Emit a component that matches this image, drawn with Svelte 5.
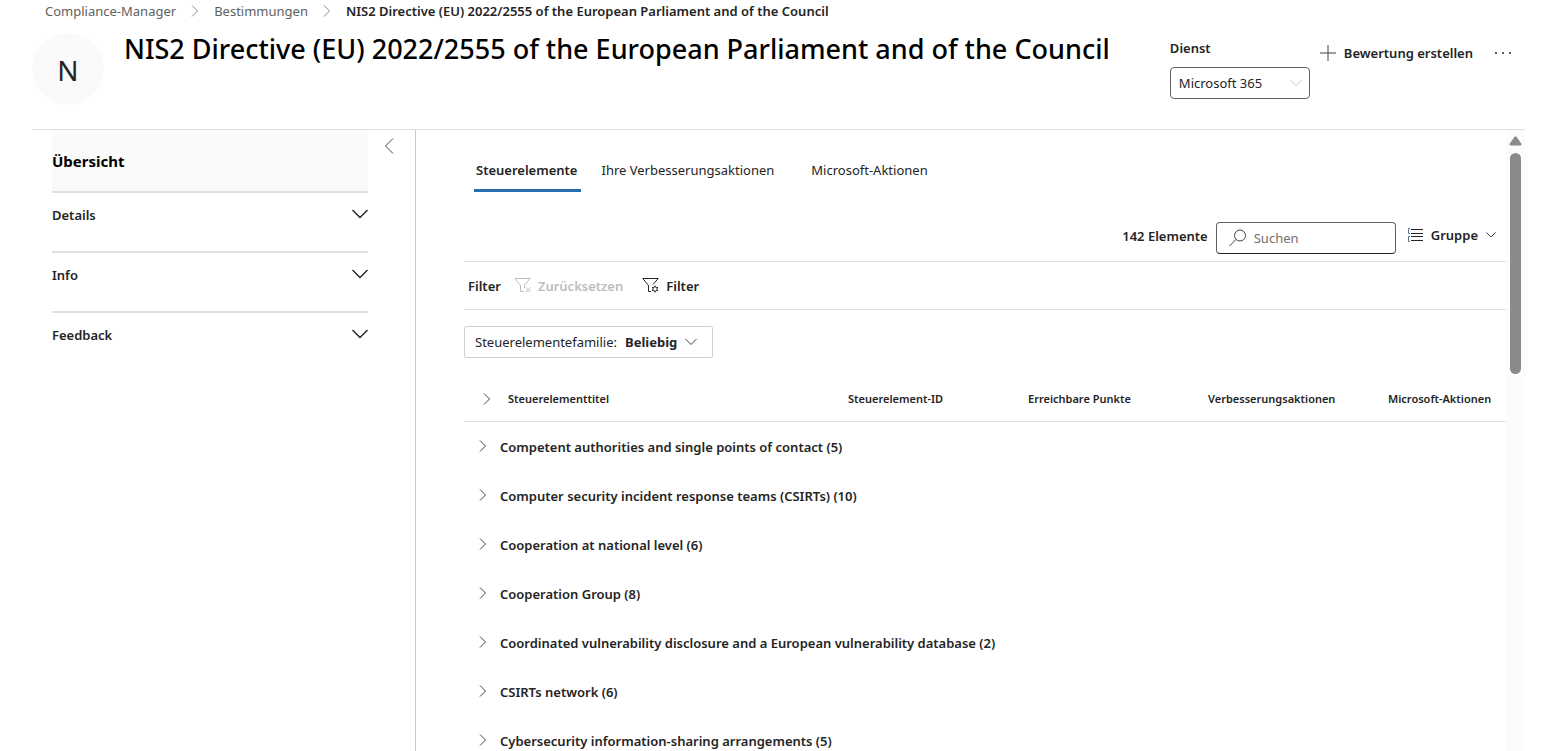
<script lang="ts">
	const service = 'Microsoft 365';
	const title = 'NIS2 Directive (EU) 2022/2555 of the European Parliament and of the Council';

	let activeTab = $state(0);
	let query = $state('');

	const crumbs = ['Compliance-Manager', 'Bestimmungen'];
	const panels = ['Details', 'Info', 'Feedback'];
	const tabs = ['Steuerelemente', 'Ihre Verbesserungsaktionen', 'Microsoft-Aktionen'];
	const columns = [
		'Steuerelement-ID',
		'Erreichbare Punkte',
		'Verbesserungsaktionen',
		'Microsoft-Aktionen'
	];

	const groups: { name: string; count: number }[] = [
		{ name: 'Competent authorities and single points of contact', count: 5 },
		{ name: 'Computer security incident response teams (CSIRTs)', count: 10 },
		{ name: 'Cooperation at national level', count: 6 },
		{ name: 'Cooperation Group', count: 8 },
		{ name: 'Coordinated vulnerability disclosure and a European vulnerability database', count: 2 },
		{ name: 'CSIRTs network', count: 6 },
		{ name: 'Cybersecurity information-sharing arrangements', count: 5 }
	];
</script>

{#snippet chevronRight()}
	<svg width="8" height="12" viewBox="0 0 8 12" aria-hidden="true">
		<path d="M1 0.5 6.5 6 1 11.5" />
	</svg>
{/snippet}

{#snippet chevronDown()}
	<svg width="12" height="8" viewBox="0 0 12 8" aria-hidden="true">
		<path d="M0.5 1 6 6.5 11.5 1" />
	</svg>
{/snippet}

<div class="page">
	<header class="header">
		<nav class="breadcrumb" aria-label="Breadcrumb">
			{#each crumbs as crumb}
				<a href="#{crumb}">{crumb}</a>
				{@render chevronRight()}
			{/each}
			<span class="current">{title}</span>
		</nav>

		<div class="title-row">
			<div class="avatar">N</div>
			<h1>{title}</h1>
			<div class="service">
				<label for="service">Dienst</label>
				<div class="select-wrap">
					<select id="service">
						<option>{service}</option>
					</select>
					{@render chevronDown()}
				</div>
			</div>
			<button class="command create">
				<svg width="16" height="16" viewBox="0 0 16 16" aria-hidden="true">
					<path d="M8 0v16M0 8h16" />
				</svg>
				Bewertung erstellen
			</button>
			<button class="command more" aria-label="Mehr">
				<svg width="16" height="4" viewBox="0 0 16 4" aria-hidden="true">
					<circle cx="1" cy="2" r="1" />
					<circle cx="8" cy="2" r="1" />
					<circle cx="15" cy="2" r="1" />
				</svg>
			</button>
		</div>
	</header>

	<div class="body">
		<aside class="sidebar">
			<div class="panels">
				<h2>Übersicht</h2>
				{#each panels as panel}
					<button class="panel">
						{panel}
						<svg width="16" height="10" viewBox="0 0 16 10" aria-hidden="true">
							<path d="M0.5 1 8 8.5 15.5 1" />
						</svg>
					</button>
				{/each}
			</div>
			<button class="collapse" aria-label="Einklappen">
				<svg width="10" height="16" viewBox="0 0 10 16" aria-hidden="true">
					<path d="M9 0.5 1.5 8 9 15.5" />
				</svg>
			</button>
		</aside>

		<main class="content">
			<div class="tabs" role="tablist">
				{#each tabs as tab, i}
					<button
						role="tab"
						class="tab"
						class:active={activeTab === i}
						aria-selected={activeTab === i}
						onclick={() => (activeTab = i)}>{tab}</button
					>
				{/each}
			</div>

			<div class="toolbar">
				<span class="count">142 Elemente</span>
				<label class="search">
					<svg width="18" height="18" viewBox="0 0 18 18" aria-hidden="true">
						<circle cx="11" cy="6.5" r="5.5" />
						<path d="M7 10.5 0.5 17" />
					</svg>
					<input type="text" placeholder="Suchen" aria-label="Suchen" bind:value={query} />
				</label>
				<button class="command group">
					<svg class="list-icon" width="16" height="14" viewBox="0 0 16 14" aria-hidden="true">
						<path d="M4 1.5h12M4 5.5h12M4 8.5h12M4 12.5h12" />
						<path class="bracket" d="M3 0.5H1.5v5H3M3 8.5H1.5v5H3" />
					</svg>
					Gruppe
					<svg width="10" height="6" viewBox="0 0 10 6" aria-hidden="true">
						<path d="M0.5 0.5 5 5 9.5 0.5" />
					</svg>
				</button>
			</div>

			<div class="filters">
				<span>Filter</span>
				<button class="command" disabled>
					<svg width="17" height="15" viewBox="0 0 17 15" aria-hidden="true">
						<path d="M10 13.5H6.5V7.5L0.8 0.5h15.4L10.5 7v3" />
						<path d="M12 9.5l4.5 4.5M16.5 9.5L12 14" />
					</svg>
					Zurücksetzen
				</button>
				<button class="command set-filter">
					<svg width="17" height="15" viewBox="0 0 17 15" aria-hidden="true">
						<path d="M9 13.5H6.5V7.5L0.8 0.5h15.4L11 6.5" />
						<circle cx="13" cy="11" r="2.2" />
						<path d="M13 7.5v1.3M13 13.2v1.3M10 9.3l1.1.6M14.9 12.1l1.1.6M10 12.7l1.1-.6M14.9 9.9l1.1-.6" />
					</svg>
					Filter
				</button>
			</div>

			<button class="pill">
				Steuerelementefamilie: <b>Beliebig</b>
				{@render chevronDown()}
			</button>

			<table>
				<colgroup>
					<col class="col-toggle" />
					<col />
					<col class="col-data" />
					<col class="col-data" />
					<col class="col-data" />
					<col class="col-last" />
				</colgroup>
				<thead>
					<tr>
						<th class="toggle-all">
							<button aria-label="Alle erweitern">{@render chevronRight()}</button>
						</th>
						<th>Steuerelementtitel</th>
						{#each columns as column}
							<th>{column}</th>
						{/each}
					</tr>
				</thead>
				<tbody>
					{#each groups as group}
						<tr>
							<td colspan="6">
								<button class="group-row">
									{@render chevronRight()}
									{group.name} ({group.count})
								</button>
							</td>
						</tr>
					{/each}
				</tbody>
			</table>
		</main>

		<div class="scrollbar" aria-hidden="true">
			<svg width="13" height="10" viewBox="0 0 13 10">
				<path d="M5.5 0.8Q6.5 -0.4 7.5 0.8L12.2 7.5Q13 9.6 11 9.6H2Q0 9.6 0.8 7.5Z" />
			</svg>
			<div class="thumb"></div>
		</div>
	</div>
</div>

<style>
	:global(body) {
		background: #fff;
	}

	.page {
		display: flex;
		flex-direction: column;
		height: 100vh;
		padding: 0 23px 0 32px;
		box-sizing: border-box;
		overflow: hidden;
		font-family: 'Noto Sans', 'Open Sans', sans-serif;
		font-size: 13px;
		line-height: 20px;
		color: #242424;
	}

	button {
		padding: 0;
		border: none;
		background: none;
		font: inherit;
		font-weight: 600;
		color: inherit;
		cursor: pointer;
	}

	svg {
		flex: none;
		fill: none;
		stroke: #424242;
	}

	.header {
		flex: none;
		height: 129px;
		border-bottom: 1px solid #e0e0e0;
	}

	.breadcrumb {
		display: flex;
		align-items: center;
		gap: 15px;
		height: 22px;
		padding-left: 13px;
	}

	.breadcrumb a {
		color: #616161;
		text-decoration: none;
	}

	.breadcrumb svg {
		stroke: #8a8a8a;
	}

	.breadcrumb .current {
		font-weight: 600;
	}

	.title-row {
		display: flex;
		align-items: flex-start;
		padding-top: 11px;
	}

	.avatar {
		flex: none;
		width: 72px;
		height: 72px;
		border-radius: 50%;
		background: #fafafa;
		font-size: 28px;
		line-height: 74px;
		text-align: center;
	}

	h1 {
		flex: 1;
		margin: 0 0 0 20px;
		font-size: 27px;
		font-weight: 500;
		line-height: 32px;
		white-space: nowrap;
		color: #000;
	}

	.service {
		width: 140px;
		padding-top: 5px;
	}

	.service label {
		display: block;
		margin-bottom: 9px;
		font-weight: 600;
	}

	.select-wrap {
		position: relative;
	}

	.select-wrap svg {
		position: absolute;
		top: 12px;
		right: 8px;
		stroke: #c8c8c8;
		pointer-events: none;
	}

	select {
		width: 100%;
		height: 32px;
		padding: 0 8px;
		border: 1px solid #616161;
		border-radius: 4px;
		background: #fff;
		appearance: none;
		font: inherit;
		color: inherit;
	}

	.command {
		display: flex;
		align-items: center;
		gap: 8px;
	}

	.create {
		margin: 10px 22px 0 10px;
		white-space: nowrap;
	}

	.more {
		height: 20px;
		margin: 10px 14px 0 0;
	}

	.more svg {
		fill: #242424;
		stroke: none;
	}

	.body {
		display: flex;
		flex: 1;
		min-height: 0;
	}

	.sidebar {
		display: flex;
		flex: none;
		align-items: flex-start;
		gap: 16px;
		width: 383px;
		padding-left: 20px;
		box-sizing: border-box;
	}

	.panels {
		width: 316px;
	}

	h2 {
		margin: 0;
		height: 61px;
		background: #fafafa;
		font-size: 15px;
		font-weight: 700;
		line-height: 62px;
		color: #000;
	}

	.panel {
		display: flex;
		justify-content: space-between;
		width: 100%;
		height: 60px;
		padding-top: 12px;
		border-top: 2px solid #e0e0e0;
	}

	.panel svg {
		margin-top: 4px;
		stroke: #242424;
		stroke-width: 1.4;
	}

	.collapse {
		display: flex;
		padding-top: 8px;
	}

	.content {
		flex: 1;
		min-width: 0;
		padding-left: 48px;
		border-left: 1px solid #c8c8c8;
		overflow: hidden;
	}

	.tabs {
		display: flex;
		gap: 20px;
		padding: 18px 0 0 10px;
	}

	.tab {
		height: 44px;
		padding: 0 17px 0 0;
		border: solid transparent;
		border-width: 3px 0;
		font-weight: 400;
	}

	.tab.active {
		padding: 0 4px 0 2px;
		border-bottom-color: #2b6cb0;
		font-weight: 600;
	}

	.toolbar {
		display: flex;
		align-items: center;
		justify-content: flex-end;
		gap: 8px;
		padding: 30px 10px 7px 0;
		border-bottom: 1px solid #e0e0e0;
	}

	.count {
		padding-bottom: 4px;
		font-weight: 600;
	}

	.search {
		display: flex;
		align-items: center;
		gap: 7px;
		width: 180px;
		height: 32px;
		padding: 0 12px;
		border: 1px solid #616161;
		border-bottom-color: #242424;
		border-radius: 4px;
		box-sizing: border-box;
	}

	.search input {
		flex: 1;
		min-width: 0;
		padding: 0;
		border: none;
		outline: none;
		font: inherit;
	}

	.search input::placeholder {
		color: #707070;
	}

	.group {
		padding: 0 0 6px 3px;
	}

	.list-icon {
		stroke: #242424;
	}

	.list-icon .bracket {
		stroke: #5a7590;
	}

	.filters {
		display: flex;
		align-items: center;
		height: 47px;
		padding-left: 4px;
		border-bottom: 1px solid #e0e0e0;
		font-weight: 600;
	}

	.filters .command {
		gap: 7px;
		margin-left: 13px;
	}

	.filters .set-filter {
		margin-left: 19px;
	}

	.filters .command:disabled {
		color: #bdbdbd;
		cursor: default;
	}

	.filters .command:disabled svg {
		stroke: #bdbdbd;
	}

	.filters .set-filter svg {
		stroke: #242424;
	}

	.pill {
		display: flex;
		align-items: center;
		gap: 8px;
		height: 32px;
		margin: 16px 0 20px;
		padding: 0 15px 0 10px;
		border: 1px solid #d1d1d1;
		border-radius: 2px;
		font-weight: 400;
	}

	table {
		width: 100%;
		table-layout: fixed;
		border-collapse: collapse;
	}

	.col-toggle {
		width: 36px;
	}

	.col-data {
		width: 180px;
	}

	.col-last {
		width: 126px;
	}

	th {
		height: 41px;
		padding: 0 8px 2px;
		border-bottom: 1px solid #e0e0e0;
		font-size: 11px;
		font-weight: 600;
		text-align: left;
		white-space: nowrap;
	}

	.toggle-all {
		padding: 0 0 2px 19px;
	}

	.toggle-all button {
		display: flex;
	}

	td {
		padding: 0;
	}

	.group-row {
		display: flex;
		align-items: center;
		gap: 13px;
		width: 100%;
		height: 49px;
		padding-left: 15px;
		text-align: left;
	}

	.group-row svg {
		margin-bottom: 2px;
	}

	.scrollbar {
		display: flex;
		flex: none;
		flex-direction: column;
		align-items: center;
		gap: 7px;
		width: 19px;
		padding-top: 6px;
		box-sizing: border-box;
		background: #fcfcfc;
	}

	.scrollbar svg {
		fill: #8a8a8a;
		stroke: none;
	}

	.thumb {
		width: 11px;
		height: 221px;
		border-radius: 6px;
		background: #8a8a8a;
	}
</style>
